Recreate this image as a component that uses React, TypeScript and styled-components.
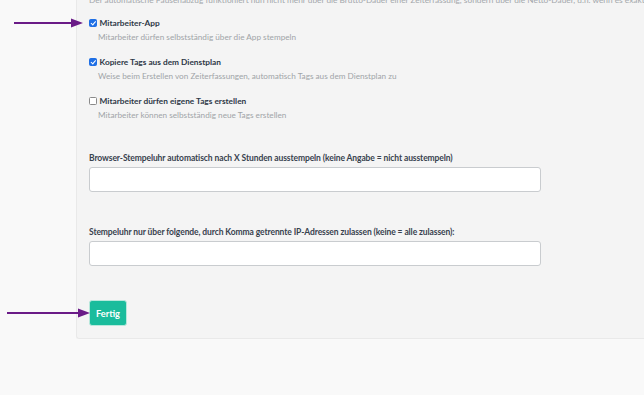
import styled, { createGlobalStyle } from 'styled-components';

const GlobalStyle = createGlobalStyle`
  html, body {
    margin: 0;
    background: #f9f9f9;
    font-family: Lato, 'Open Sans', sans-serif;
    overflow: hidden;
  }
`;

const Page = styled.div`
  position: relative;
  display: flex;
  width: 644px;
  height: 395px;
  background: #f9f9f9;
`;

const Gutter = styled.div`
  width: 76px;
  flex-shrink: 0;
`;

const Panel = styled.div`
  flex: 1;
  align-self: flex-start;
  margin-top: -7px;
  padding: 0 0 12px 12px;
  background: #f4f4f4;
  border-left: 1px solid #e9e9e9;
  border-bottom: 1px solid #e9e9e9;
  border-bottom-left-radius: 3px;
  display: flex;
  flex-direction: column;
`;

const Intro = styled.div`
  font-size: 8.3px;
  line-height: 14px;
  color: #a3a7ab;
  white-space: nowrap;
  overflow: hidden;
  margin-bottom: 9px;
`;

const OptionList = styled.div`
  display: flex;
  flex-direction: column;
  gap: 11px;
`;

const Option = styled.div`
  position: relative;
  display: flex;
  flex-direction: column;
`;

const OptionHead = styled.div`
  display: flex;
  align-items: center;
  gap: 3px;
  height: 14px;
`;

const BoxSlot = styled.span`
  position: relative;
  display: flex;
`;

const Box = styled.span<{ $checked?: boolean }>`
  width: 7.5px;
  height: 7.5px;
  border-radius: 1.5px;
  box-sizing: border-box;
  border: 1px solid ${(p) => (p.$checked ? '#1f6fe5' : '#8a8a8a')};
  background: ${(p) => (p.$checked ? '#1f6fe5' : '#fff')};
  position: relative;
  flex-shrink: 0;
  &::after {
    content: '';
    display: ${(p) => (p.$checked ? 'block' : 'none')};
    position: absolute;
    left: 1.6px;
    top: 0;
    width: 1.6px;
    height: 3.6px;
    border: solid #fff;
    border-width: 0 1px 1px 0;
    transform: rotate(40deg);
  }
`;

const OptionTitle = styled.span`
  font-size: 8.3px;
  font-weight: 700;
  color: #2e3847;
`;

const OptionDesc = styled.div`
  font-size: 8.2px;
  line-height: 14px;
  color: #a0a4a8;
  padding-left: 9px;
`;

const Field = styled.div<{ $top: number }>`
  display: flex;
  flex-direction: column;
  gap: 2px;
  margin-top: ${(p) => p.$top}px;
`;

const FieldLabel = styled.label`
  font-size: 8.5px;
  line-height: 14px;
  font-weight: 700;
  color: #38424e;
  letter-spacing: -0.1px;
`;

const TextInput = styled.input`
  width: 452px;
  height: 25px;
  box-sizing: border-box;
  border: 1px solid #c9cccf;
  border-radius: 3px;
  background: #fff;
  outline: none;
`;

const Actions = styled.div`
  margin-top: 34px;
  display: flex;
`;

const DoneButton = styled.button`
  height: 26px;
  width: 38px;
  padding: 0;
  border: 1px solid #b8e8dc;
  border-radius: 3px;
  background: #1abc9c;
  color: #fff;
  font-family: Lato, sans-serif;
  font-size: 9.2px;
  font-weight: 700;
`;

const ArrowWrap = styled.svg`
  position: absolute;
  top: 50%;
  transform: translateY(-50%);
  overflow: visible;
`;

const Arrow = ({ length, gap }: { length: number; gap: number }) => (
  <ArrowWrap
    width={length}
    height={10}
    style={{ right: `calc(100% + ${gap}px)` }}
    viewBox={`0 0 ${length} 10`}
  >
    <line x1={0} y1={5} x2={length - 10} y2={5} stroke='#6a1b87' strokeWidth={2} />
    <polygon points={`${length - 12},0.5 ${length},5 ${length - 12},9.5`} fill='#6a1b87' />
  </ArrowWrap>
);

const options = [
  {
    title: 'Mitarbeiter-App',
    desc: 'Mitarbeiter dürfen selbstständig über die App stempeln',
    checked: true,
    arrow: true,
  },
  {
    title: 'Kopiere Tags aus dem Dienstplan',
    desc: 'Weise beim Erstellen von Zeiterfassungen, automatisch Tags aus dem Dienstplan zu',
    checked: true,
  },
  {
    title: 'Mitarbeiter dürfen eigene Tags erstellen',
    desc: 'Mitarbeiter können selbstständig neue Tags erstellen',
    checked: false,
  },
];

const App = () => {
  return (
    <Page>
      <GlobalStyle />
      <Gutter />
      <Panel>
        <Intro>
          Der automatische Pausenabzug funktioniert nun nicht mehr über die Brutto-Dauer einer
          Zeiterfassung, sondern über die Netto-Dauer, d.h. wenn es exakt
        </Intro>
        <OptionList>
          {options.map((o) => (
            <Option key={o.title}>
              <OptionHead>
                <BoxSlot>
                  {o.arrow && <Arrow length={69} gap={6} />}
                  <Box $checked={o.checked} />
                </BoxSlot>
                <OptionTitle>{o.title}</OptionTitle>
              </OptionHead>
              <OptionDesc>{o.desc}</OptionDesc>
            </Option>
          ))}
        </OptionList>
        <Field $top={29}>
          <FieldLabel>
            Browser-Stempeluhr automatisch nach X Stunden ausstempeln (keine Angabe = nicht
            ausstempeln)
          </FieldLabel>
          <TextInput type='text' />
        </Field>
        <Field $top={33}>
          <FieldLabel>
            Stempeluhr nur über folgende, durch Komma getrennte IP-Adressen zulassen (keine = alle
            zulassen):
          </FieldLabel>
          <TextInput type='text' />
        </Field>
        <Actions>
          <BoxSlot>
            <Arrow length={83} gap={-1} />
            <DoneButton>Fertig</DoneButton>
          </BoxSlot>
        </Actions>
      </Panel>
    </Page>
  );
};

export default App;
